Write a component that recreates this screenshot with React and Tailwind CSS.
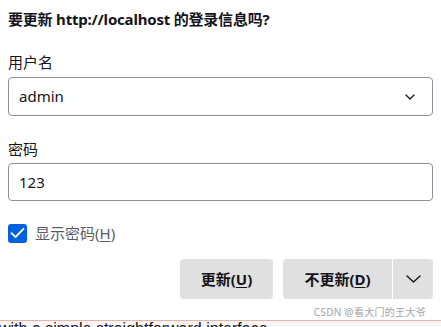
import React from "react";

const FONT = { fontFamily: '"Noto Sans", "Noto Sans CJK SC", sans-serif' };

function SmallChevron({ className }) {
  return (
    <svg className={className} width="10" height="6" viewBox="0 0 10 6" fill="none">
      <path d="M1 1L5 5L9 1" stroke="#15141a" strokeWidth="1.3" strokeLinecap="round" strokeLinejoin="round" />
    </svg>
  );
}

export default function App() {
  return (
    <div className="w-[441px] h-[327px] overflow-hidden bg-white relative flex flex-col text-[#15141a]" style={FONT}>
      <div className="h-[320px] shrink-0 flex flex-col px-2">
        <div className="pt-[9px] text-[15px] leading-[20px] font-bold tracking-[-0.2px]">要更新 http://localhost 的登录信息吗?</div>
        <div className="mt-[23px] text-[15px] leading-[20px]">用户名</div>
        <div className="mt-[5px] h-[39px] rounded-[4px] border border-[#8f8f9d] flex items-center justify-between pl-[10px] pr-[17px]">
          <span className="text-[15px]">admin</span>
          <SmallChevron />
        </div>
        <div className="mt-[23px] text-[15px] leading-[20px]">密码</div>
        <div className="mt-[4px] h-[38px] rounded-[4px] border border-[#8f8f9d] flex items-center pl-[10px]">
          <span className="text-[15px]">123</span>
        </div>
        <div className="mt-[22px] h-[20px] flex items-center gap-2">
          <div className="w-[19px] h-[19px] rounded-[3px] bg-[#0061e0] flex items-center justify-center">
            <svg width="15" height="12" viewBox="0 0 15 12" fill="none">
              <path d="M1.5 6.2L5.5 10L13.5 1.8" stroke="white" strokeWidth="1.8" strokeLinecap="round" strokeLinejoin="round" />
            </svg>
          </div>
          <span className="text-[15px] text-[#5b5b66] leading-[20px]">
            显示密码(<span className="underline underline-offset-2">H</span>)
          </span>
        </div>
        <div className="mt-[16px] flex justify-end gap-[10px]">
          <button className="w-[93px] h-[40px] rounded-[4px] bg-[#e0e0e0] text-[15px] font-bold flex items-center justify-center">
            更新(<span className="underline underline-offset-2">U</span>)
          </button>
          <div className="flex h-[40px] rounded-[4px] overflow-hidden bg-[#e0e0e0]">
            <button className="w-[109px] h-full text-[15px] font-bold flex items-center justify-center">
              不更新(<span className="underline underline-offset-2">D</span>)
            </button>
            <div className="w-px h-full bg-white" />
            <button className="w-[40px] h-full flex items-center justify-center">
              <svg width="15" height="8" viewBox="0 0 15 8" fill="none">
                <path d="M1 1L7.5 7L14 1" stroke="#15141a" strokeWidth="1.4" strokeLinecap="round" strokeLinejoin="round" />
              </svg>
            </button>
          </div>
        </div>
      </div>
      <div className="absolute right-[15px] top-[305px] text-[10px] leading-[14px] text-[#a3a3a3] tracking-[0.3px]">CSDN @看大门的王大爷</div>
      <div className="border-t border-[#efb3a3] bg-[#f7f7f7] flex-1">
        <div className="-mt-[1px] -ml-[1px] text-[16px] leading-[18px] whitespace-nowrap" style={{ fontFamily: '"Liberation Sans", sans-serif' }}>
          with a simple straightforward interface
        </div>
      </div>
    </div>
  );
}
